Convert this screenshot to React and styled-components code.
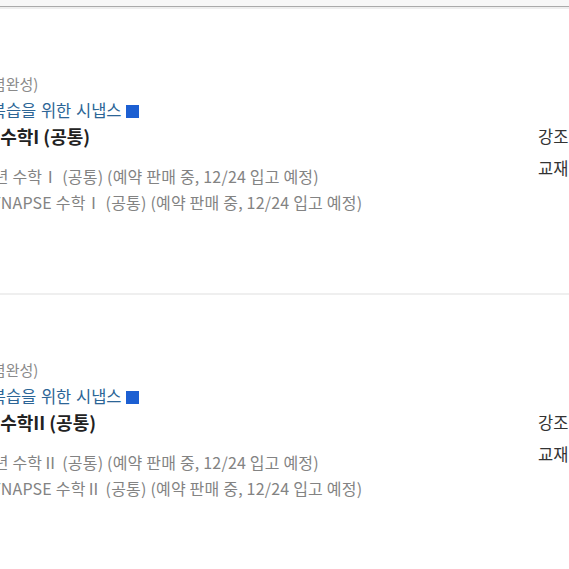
import styled, { createGlobalStyle } from "styled-components";

const GlobalStyle = createGlobalStyle`
  html, body {
    margin: 0;
    padding: 0;
    background: #ffffff;
  }
  body {
    font-family: "Noto Sans CJK KR", "Noto Sans", sans-serif;
    overflow: hidden;
  }
`;

const Page = styled.div`
  width: 569px;
  height: 569px;
  overflow: hidden;
  background: #fff;
`;

const TopBar = styled.div`
  height: 6px;
  background: #f7f7f7;
  border-bottom: 1px solid #aaaaaa;
  box-shadow: 0 2px 0 #eeeeee;
`;

const Card = styled.section`
  height: 286px;
  box-sizing: border-box;
  padding-top: 62px;
  border-bottom: ${(p) => (p.$last ? "none" : "2px solid #efefef")};
  margin-top: ${(p) => (p.$first ? "2px" : "0")};
`;

const Row = styled.div`
  display: flex;
  margin-left: -27px;
  white-space: nowrap;
`;

const Info = styled.div`
  flex: 0 0 565px;
  display: flex;
  flex-direction: column;
`;

const Line = styled.div`
  font-size: 15px;
  line-height: 26px;
  color: #8a8a8a;
`;

const Series = styled(Line)`
  color: #2c6596;
  font-size: 16.5px;
  word-spacing: 1px;
`;

const Square = styled.span`
  display: inline-block;
  width: 13px;
  height: 13px;
  background: #1c5fd2;
  vertical-align: -1px;
`;

const Title = styled.div`
  font-size: 18px;
  font-weight: 700;
  line-height: 26px;
  color: #222;
`;

const Detail = styled(Line)`
  font-size: 16px;
  letter-spacing: 0.2px;
  color: #838383;
  margin-top: ${(p) => (p.$gap ? "14px" : "0")};
`;

const Side = styled.div`
  margin-top: 49px;
  display: flex;
  flex-direction: column;
`;

const SideItem = styled.div`
  font-size: 16.5px;
  line-height: 32px;
  color: #333;
`;

const items = [
  { title: "고2수학I (공통)", num: "Ⅰ" },
  { title: "고2수학II (공통)", num: "Ⅱ" },
];

export default function App() {
  return (
    <Page>
      <GlobalStyle />
      <TopBar />
      {items.map((it, i) => (
        <Card key={i} $first={i === 0} $last={i === items.length - 1}>
          <Row>
            <Info>
              <Line>(개념완성)</Line>
              <Series>
                <Square /> 복습을 위한 시냅스 <Square />
              </Series>
              <Title>{it.title}</Title>
              <Detail $gap>
                -학년 수학{it.num}  (공통) (예약 판매 중, 12/24 입고 예정)
              </Detail>
              <Detail>
                - SYNAPSE 수학{it.num} (공통) (예약 판매 중, 12/24 입고 예정)
              </Detail>
            </Info>
            <Side>
              <SideItem>강조 표시</SideItem>
              <SideItem>교재 정보</SideItem>
            </Side>
          </Row>
        </Card>
      ))}
    </Page>
  );
}
